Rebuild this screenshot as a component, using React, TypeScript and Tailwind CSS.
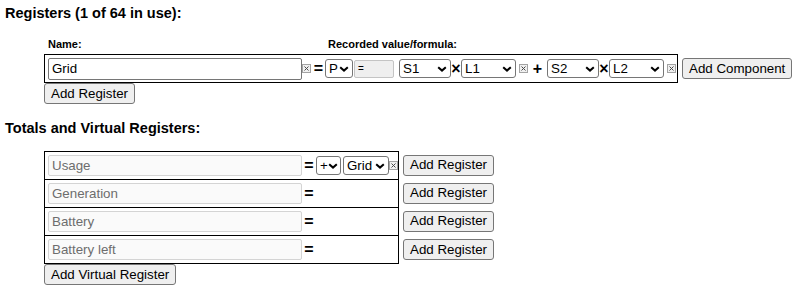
import React from "react";

const Chevron = () => (
  <svg width="10" height="6" viewBox="0 0 10 6" className="shrink-0">
    <path d="M1.2 1.2L5 4.6L8.8 1.2" fill="none" stroke="#000" strokeWidth="2" />
  </svg>
);

const XBox = () => (
  <svg width="9" height="9" viewBox="0 0 9 9" className="shrink-0">
    <rect x="0.5" y="0.5" width="8" height="8" fill="#f0f0f0" stroke="#a3a3a3" />
    <path d="M2.5 2.5L6.5 6.5M6.5 2.5L2.5 6.5" stroke="#4a4a4a" strokeWidth="1" />
  </svg>
);

function Sel({ label, w }: { label: string; w: string }) {
  return (
    <div className={`box-border flex h-[19px] shrink-0 items-center justify-between rounded-[3px] border border-[#767676] bg-white pl-[3px] pr-[3px] text-[13.33px] leading-none ${w}`}>
      <span>{label}</span>
      <Chevron />
    </div>
  );
}

function Btn({ children, className = "" }: { children: React.ReactNode; className?: string }) {
  return (
    <button className={`box-border h-[21px] shrink-0 rounded-[3px] border border-[#767676] bg-[#efefef] px-[6px] text-[13.33px] leading-none text-black ${className}`}>
      {children}
    </button>
  );
}

const Op = ({ ch, w }: { ch: string; w: string }) => (
  <span className={`shrink-0 text-center text-[16px] font-bold leading-none ${w}`}>{ch}</span>
);

const VIRTUAL = ["Usage", "Generation", "Battery", "Battery left"];

export default function App() {
  return (
    <div className="min-h-screen bg-white font-['Liberation_Sans',Arial,sans-serif] text-black">
      <h2 className="pl-[5px] pt-[5px] text-[14.5px] font-bold leading-[17px]">Registers (1 of 64 in use):</h2>

      <div className="mt-[16px] flex text-[11px] font-bold leading-[13px]">
        <span className="ml-[48px] w-[280px]">Name:</span>
        <span>Recorded value/formula:</span>
      </div>

      <div className="mt-[3px] flex items-center">
        <div className="ml-[44px] box-border flex h-[29px] w-[634px] items-center border border-black pl-[3px]">
          <input
            defaultValue="Grid"
            className="box-border h-[22px] w-[254px] shrink-0 rounded-[2px] border border-[#767676] bg-white pl-[3px] text-[13.33px] text-black outline-none"
          />
          <XBox />
          <Op ch="=" w="ml-[1px] w-[13px]" />
          <Sel label="P" w="w-[28px]" />
          <div className="ml-[1px] box-border flex h-[18px] w-[40px] shrink-0 items-center rounded-[2px] border border-[#c4c4c4] bg-[#efefef] pl-[3px] text-[10px] leading-none">=</div>
          <div className="ml-[5px]"><Sel label="S1" w="w-[52px]" /></div>
          <Op ch="×" w="w-[10px]" />
          <Sel label="L1" w="w-[55px]" />
          <div className="ml-[3px]"><XBox /></div>
          <Op ch="+" w="w-[19px]" />
          <Sel label="S2" w="w-[52px]" />
          <Op ch="×" w="w-[10px]" />
          <Sel label="L2" w="w-[55px]" />
          <div className="ml-[3px]"><XBox /></div>
        </div>
        <Btn className="ml-[4px]">Add Component</Btn>
      </div>
      <Btn className="ml-[44px] block">Add Register</Btn>

      <h2 className="mt-[16px] pl-[5px] text-[14.5px] font-bold leading-[17px]">Totals and Virtual Registers:</h2>

      <div className="ml-[44px] mt-[14px]">
        {VIRTUAL.map((name, i) => (
          <div key={name} className="flex items-center">
            <div
              className={
                i === VIRTUAL.length - 1
                  ? "box-border flex h-[29px] w-[355px] items-center border border-black pl-[3px]"
                  : "box-border flex h-[28px] w-[355px] items-center border-x border-t border-black pl-[3px]"
              }
            >
              <input
                disabled
                defaultValue={name}
                className="box-border h-[21px] w-[254px] shrink-0 rounded-[2px] border border-[#d4d4d4] bg-[#fafafa] pl-[3px] text-[13.33px] text-[#6d6d6d]"
              />
              <Op ch="=" w="w-[14px]" />
              {i === 0 && (
                <>
                  <Sel label="+" w="w-[25px]" />
                  <div className="ml-[2px]"><Sel label="Grid" w="w-[46px]" /></div>
                  <XBox />
                </>
              )}
            </div>
            <Btn className="ml-[4px]">Add Register</Btn>
          </div>
        ))}
        <Btn className="block">Add Virtual Register</Btn>
      </div>
    </div>
  );
}
